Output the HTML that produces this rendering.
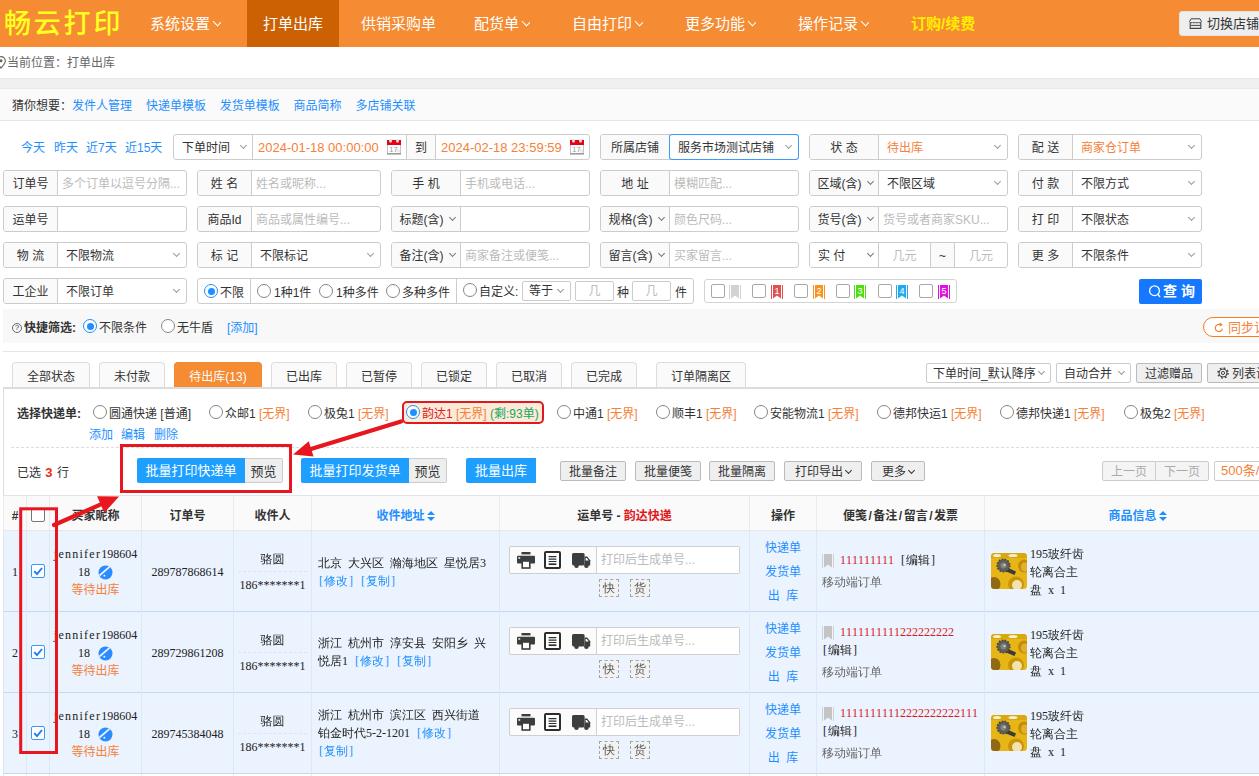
<!DOCTYPE html>
<html lang="zh-CN">
<head>
<meta charset="utf-8">
<title>畅云打印 - 打单出库</title>
<style>
*{box-sizing:border-box;margin:0;padding:0}
html,body{width:1259px;height:776px;overflow:hidden;background:#fff}
body{font-family:"Liberation Sans","Noto Sans CJK SC",sans-serif;font-size:12px;color:#333;position:relative}
a{color:#1e8fff;text-decoration:none}
.abs{position:absolute}
/* NAV */
#nav{position:absolute;left:0;top:0;width:1259px;height:47px;background:#f58b32}
#logo{position:absolute;left:4px;top:0;height:47px;line-height:49px;font-size:27px;color:#ffff22;font-family:"Liberation Sans","Noto Sans CJK SC",sans-serif;font-weight:500;letter-spacing:2.8px;white-space:nowrap}
.ni{position:absolute;top:0;height:47px;line-height:48px;overflow:hidden;font-size:15px;color:#fff;white-space:nowrap}
.ni.act{background:#cc6103;text-align:center}
.chev{display:inline-block;width:7px;height:7px;border-right:1.7px solid currentColor;border-bottom:1.7px solid currentColor;transform:rotate(45deg);margin-left:4px;position:relative;top:-4px}
#sw{position:absolute;left:1179px;top:11px;width:90px;height:25px;background:#eee;border:1px solid #e2e2e2;border-radius:3px;font-size:13px;color:#333;line-height:24px;padding-left:27px;white-space:nowrap}

/* BREADCRUMB */
#crumb{position:absolute;left:0;top:47px;width:1259px;height:31px;background:#fff;color:#666;font-size:12px;line-height:33px;padding-left:7px}
#band1{position:absolute;left:0;top:78px;width:1259px;height:10px;background:#f0f0f0;border-top:1px solid #e6e6e6}
#guess{position:absolute;left:0;top:88px;width:1259px;height:33px;background:#fafafa;border-top:1px solid #e9e9e9;border-bottom:1px solid #e6e6e6;line-height:34px;padding-left:12px;color:#333;white-space:nowrap;overflow:hidden}
#guess a{margin-right:10.5px}
/* FILTER */
.fg{position:absolute;height:26px;border:1px solid #ccc;border-radius:3px;background:#fff;overflow:hidden;white-space:nowrap}
.fg .lb{position:absolute;left:0;top:0;height:24px;line-height:26px;text-align:center;background:#fafafa;border-right:1px solid #ccc;color:#333;font-size:12px}
.fg .in{position:absolute;top:0;height:24px;line-height:26px;padding-left:4px;color:#333;font-size:12px}
.fg .ph{color:#bbb}
.fg .or{color:#f5813a}
.sel:after{content:"";position:absolute;right:7.5px;top:8px;width:4px;height:4px;border-right:1px solid #999;border-bottom:1px solid #999;transform:rotate(45deg)}
.lbsel:after{content:"";position:absolute;right:5px;top:8px;width:4px;height:4px;border-right:1px solid #777;border-bottom:1px solid #777;transform:rotate(45deg)}
.ql{position:absolute;top:134px;line-height:29px;font-size:12px;color:#1e8fff}
.radio{position:absolute;width:14px;height:14px;border:1px solid #858585;border-radius:50%;background:#fff}
.radio.on{border-color:#1e8fff;border-width:1.3px}
.radio.on:after{content:"";position:absolute;left:50%;top:50%;width:7px;height:7px;margin:-3.5px 0 0 -3.5px;border-radius:50%;background:#1e8fff}
.cb{position:absolute;width:14px;height:14px;border:1px solid #767676;border-radius:2px;background:#fff}
.t13{position:absolute;font-size:12px;line-height:16px;margin-top:2px;white-space:nowrap;color:#333}

#query{position:absolute;left:1139px;top:279px;width:63px;height:25px;background:#1677ff;border-radius:2px;color:#fff;font-size:14px;font-weight:bold;line-height:25px;padding-left:24px;white-space:nowrap}
.sel{position:absolute}

#quick{position:absolute;left:3px;top:309px;width:1256px;height:34px;background:#f8f8f8}
#sync{position:absolute;left:1200px;top:8px;width:90px;height:20px;border:1px solid #f57c1f;border-radius:10px;background:#fff;color:#f5813a;font-size:13px;line-height:19px;padding-left:24px;white-space:nowrap}
.tab{position:absolute;top:362px;height:26px;border:1px solid #ddd;border-bottom:0;border-radius:4px 4px 0 0;background:#fafafa;text-align:center;line-height:28px;font-size:12px;color:#333;white-space:nowrap;overflow:hidden}
.tab.on{background:#f58b32;border-color:#f58b32;color:#fff}
.tsel{position:absolute;top:363px;height:20px;border:1px solid #ccc;border-radius:2px;background:#fff;font-size:12px;line-height:20px;overflow:hidden;padding-left:7px;white-space:nowrap;color:#333}
.tsel.sel:after{top:5px;right:6px;width:4px;height:4px}
.gbtn{position:absolute;top:461px;height:20px;border:1px solid #bbb;border-radius:2px;background:#efefef;font-size:12px;line-height:20px;overflow:hidden;text-align:center;color:#333;white-space:nowrap}
.bbtn{position:absolute;top:458px;height:25px;background:#1e9fff;border-radius:2px 0 0 2px;color:#fff;font-size:13px;line-height:26px;text-align:center;white-space:nowrap;overflow:hidden}
.pbtn{position:absolute;top:458px;width:38px;height:25px;background:#eee;border:1px solid #ccc;border-left:0;border-radius:0 2px 2px 0;color:#333;font-size:13px;line-height:25px;text-align:center;overflow:hidden}
.chev.sm{width:5px;height:5px;border-width:1px;margin-left:3px;top:-3px}

.cal{position:absolute;right:5px;top:4px}
.sel.s2:after{right:6px}
.sel.s3:after{right:7px;top:5px}
.qm{display:inline-block;width:10px;height:10px;border:1px solid #666;border-radius:50%;font-size:8px;line-height:8px;text-align:center;font-weight:normal;vertical-align:2.5px;margin-right:2px;color:#444}
/* TABLE */
#tb{position:absolute;left:3px;top:495px;width:1256px;height:281px;font-family:"Liberation Serif","WenQuanYi Zen Hei",serif;font-size:12px;color:#222;overflow:hidden;word-spacing:3px;font-kerning:none}
.thead{position:absolute;left:0;top:0;width:1290px;height:35px;background:#fafafa;border-top:1px solid #e1e5e9}
.th{position:absolute;top:0;height:34px;line-height:40px;text-align:center;font-weight:bold;border-left:1px solid #ebebeb;font-family:"Liberation Sans","Noto Sans CJK SC",sans-serif;color:#333;white-space:nowrap;word-spacing:0;overflow:hidden}
.th .bl{color:#1e8fff}
.th u{text-decoration:none;padding:0 1.5px}
.tr{position:absolute;left:0;width:1290px;height:81px;background:#ebf3fe;border-top:1px solid #c3d8f3}
.tr.first{border-top-color:#e6e6e6}
.tr.last{height:82px;border-bottom:1px solid #c3d8f3}
.td{position:absolute;top:-1px;height:81px;border-left:1px solid #dde7f5}
.ln{position:absolute;left:0;right:0;white-space:nowrap;line-height:14px}
.ls{letter-spacing:1.25px}
.lk i{display:inline-block;width:6px;text-align:center;font-style:normal}
a.lk{color:#1e8fff}
.cb.on{border-color:#3a97ff}
.st{color:#f5813a;font-family:"Liberation Sans","Noto Sans CJK SC",sans-serif}
.op{text-align:center;line-height:24px;font-family:"Liberation Sans","Noto Sans CJK SC",sans-serif;word-spacing:0}
.rd{color:#d8191e}
.trk{position:absolute;left:9px;top:16px;width:231px;height:28px;border:1px solid #cfcfcf;border-radius:2px;background:#fbfbfb}
.trkin{position:absolute;left:86px;top:0;width:143px;height:26px;background:#fff;border-left:1px solid #d0d0d0;line-height:27px;padding-left:4px;color:#bbb;font-family:"Liberation Sans","Noto Sans CJK SC",sans-serif;word-spacing:0;overflow:hidden}
.dsh{position:absolute;top:49px;width:20px;height:18px;border:1px dashed #a5a5a5;line-height:17px;text-align:center;color:#555;background:#f2f2f2}
.pimg{position:absolute;left:6px;top:23px}
.ptxt{position:absolute;left:45px;top:15px;line-height:18px;white-space:nowrap}
.ww{vertical-align:-4px;margin-left:2px}
.flag0{vertical-align:-4px;margin-right:6px}
.sort{display:inline-block;width:8px;height:10px;margin-left:2px;position:relative;vertical-align:-1px}
.sort:before{content:"";position:absolute;left:0;top:0;border:4px solid transparent;border-top:0;border-bottom:4px solid #1e8fff}
.sort:after{content:"";position:absolute;left:0;top:6px;border:4px solid transparent;border-bottom:0;border-top:4px solid #1e8fff}
</style>
</head>
<body>
<div id="nav">
  <div id="logo">畅云打印</div>
  <div class="ni" style="left:150px">系统设置<i class="chev"></i></div>
  <div class="ni act" style="left:247px;width:92px">打单出库</div>
  <div class="ni" style="left:361px">供销采购单</div>
  <div class="ni" style="left:474px">配货单<i class="chev"></i></div>
  <div class="ni" style="left:572px">自由打印<i class="chev"></i></div>
  <div class="ni" style="left:685px">更多功能<i class="chev"></i></div>
  <div class="ni" style="left:798px">操作记录<i class="chev"></i></div>
  <div class="ni" style="left:911px;color:#ffee00;font-weight:bold">订购/续费</div>
  <div id="sw"><svg class="abs" style="left:9px;top:6px" width="13" height="12" viewBox="0 0 13 12"><path d="M1.2 4.6V10.4h10.6V4.6" fill="none" stroke="#444" stroke-width="1.1"/><path d="M2 0.8h9l1.4 2.6a1.6 1.6 0 0 1-3 .6a1.6 1.6 0 0 1-2.9 0a1.6 1.6 0 0 1-2.9 0a1.6 1.6 0 0 1-3-.6z" fill="#eee" stroke="#444" stroke-width="1"/><path d="M1.4 7.4h10.2" stroke="#444" stroke-width="1"/></svg>切换店铺</div>
</div>

<div id="crumb"><svg class="abs" style="left:-4px;top:9px" width="10" height="13" viewBox="0 0 10 13"><path d="M5 .6a4.3 4.3 0 0 1 4.3 4.3c0 2.6-2.6 5-4.3 7.2C3.300 9.900 .7 7.500 .7 4.900A4.300 4.300 0 0 1 5 .6z" fill="none" stroke="#666" stroke-width="1.1"/><circle cx="5" cy="4.800" r="1.5" fill="#666"/></svg>当前位置：打单出库</div>
<div id="band1"></div>
<div id="guess">猜你想要：<a>发件人管理</a> <a>快递单模板</a> <a>发货单模板</a> <a>商品简称</a> <a>多店铺关联</a></div>

<!-- filter row 1 -->
<a class="ql" style="left:21px">今天</a><a class="ql" style="left:54px">昨天</a><a class="ql" style="left:86px">近7天</a><a class="ql" style="left:125px">近15天</a>
<div class="fg" style="left:173px;top:134px;width:417px">
  <div class="in sel s2" style="left:0;width:79px;padding-left:8px;border-right:1px solid #ccc">下单时间</div>
  <div class="in or" style="left:79px;width:154px;font-size:13px;padding-left:5px;border-right:1px solid #ccc">2024-01-18 00:00:00<svg class="cal" width="14" height="16" viewBox="0 0 14 16"><rect x="0.5" y="2.5" width="13" height="12" fill="#fff" stroke="#c4c4c4"/><rect x="0" y="1" width="14" height="5" fill="#e60012"/><rect x="2.2" y="0" width="2.6" height="3.6" rx="1.2" fill="#ddd"/><rect x="9.2" y="0" width="2.6" height="3.6" rx="1.2" fill="#ddd"/><text x="6.5" y="12.6" font-size="7.5" text-anchor="middle" fill="#9a9a9a" font-family="Liberation Sans, sans-serif">17</text><circle cx="11.3" cy="12" r="1.3" fill="#fff" stroke="#ccc" stroke-width=".6"/><rect x="0" y="14" width="14" height="1.6" fill="#9c9c9c"/></svg></div>
  <div class="lb" style="left:233px;width:29px;border-left:0">到</div>
  <div class="in or" style="left:262px;width:153px;font-size:13px;padding-left:5px">2024-02-18 23:59:59<svg class="cal" width="14" height="16" viewBox="0 0 14 16"><rect x="0.5" y="2.5" width="13" height="12" fill="#fff" stroke="#c4c4c4"/><rect x="0" y="1" width="14" height="5" fill="#e60012"/><rect x="2.2" y="0" width="2.6" height="3.6" rx="1.2" fill="#ddd"/><rect x="9.2" y="0" width="2.6" height="3.6" rx="1.2" fill="#ddd"/><text x="6.5" y="12.6" font-size="7.5" text-anchor="middle" fill="#9a9a9a" font-family="Liberation Sans, sans-serif">17</text><circle cx="11.3" cy="12" r="1.3" fill="#fff" stroke="#ccc" stroke-width=".6"/><rect x="0" y="14" width="14" height="1.6" fill="#9c9c9c"/></svg></div>
</div>
<div class="fg" style="left:600px;top:134px;width:199px"><div class="lb" style="width:69px">所属店铺</div><div class="in  sel" style="left:69px;width:128px;padding-left:8px">服务市场测试店铺</div></div>
<div class="fg" style="left:809px;top:134px;width:199px"><div class="lb" style="width:69px">状 态</div><div class="in or sel" style="left:69px;width:128px;padding-left:8px">待出库</div></div>
<div class="fg" style="left:1018px;top:134px;width:184px"><div class="lb" style="width:54px">配 送</div><div class="in or sel" style="left:54px;width:128px;padding-left:8px">商家仓订单</div></div>
<div class="fg" style="left:3px;top:170px;width:184px"><div class="lb" style="width:54px">订单号</div><div class="in ph" style="left:54px;width:128px">多个订单以逗号分隔...</div></div>
<div class="fg" style="left:197px;top:170px;width:184px"><div class="lb" style="width:54px">姓 名</div><div class="in ph" style="left:54px;width:128px">姓名或昵称...</div></div>
<div class="fg" style="left:391px;top:170px;width:199px"><div class="lb" style="width:69px">手 机</div><div class="in ph" style="left:69px;width:128px">手机或电话...</div></div>
<div class="fg" style="left:600px;top:170px;width:199px"><div class="lb" style="width:69px">地 址</div><div class="in ph" style="left:69px;width:128px">模糊匹配...</div></div>
<div class="fg" style="left:809px;top:170px;width:199px"><div class="lb lbsel" style="width:69px;padding-right:9px">区域(含)</div><div class="in  sel" style="left:69px;width:128px;padding-left:8px">不限区域</div></div>
<div class="fg" style="left:1018px;top:170px;width:184px"><div class="lb" style="width:54px">付 款</div><div class="in  sel" style="left:54px;width:128px;padding-left:8px">不限方式</div></div>
<div class="fg" style="left:3px;top:206px;width:184px"><div class="lb" style="width:54px">运单号</div><div class="in " style="left:54px;width:128px"></div></div>
<div class="fg" style="left:197px;top:206px;width:184px"><div class="lb" style="width:54px">商品Id</div><div class="in ph" style="left:54px;width:128px">商品或属性编号...</div></div>
<div class="fg" style="left:391px;top:206px;width:199px"><div class="lb lbsel" style="width:69px;padding-right:9px">标题(含)</div><div class="in " style="left:69px;width:128px"></div></div>
<div class="fg" style="left:600px;top:206px;width:199px"><div class="lb lbsel" style="width:69px;padding-right:9px">规格(含)</div><div class="in ph" style="left:69px;width:128px">颜色尺码...</div></div>
<div class="fg" style="left:809px;top:206px;width:199px"><div class="lb lbsel" style="width:69px;padding-right:9px">货号(含)</div><div class="in ph" style="left:69px;width:128px">货号或者商家SKU...</div></div>
<div class="fg" style="left:1018px;top:206px;width:184px"><div class="lb" style="width:54px">打 印</div><div class="in  sel" style="left:54px;width:128px;padding-left:8px">不限状态</div></div>
<div class="fg" style="left:3px;top:242px;width:184px"><div class="lb" style="width:54px">物 流</div><div class="in  sel" style="left:54px;width:128px;padding-left:8px">不限物流</div></div>
<div class="fg" style="left:197px;top:242px;width:184px"><div class="lb" style="width:54px">标 记</div><div class="in  sel" style="left:54px;width:128px;padding-left:8px">不限标记</div></div>
<div class="fg" style="left:391px;top:242px;width:199px"><div class="lb lbsel" style="width:69px;padding-right:9px">备注(含)</div><div class="in ph" style="left:69px;width:128px">商家备注或便笺...</div></div>
<div class="fg" style="left:600px;top:242px;width:199px"><div class="lb lbsel" style="width:69px;padding-right:9px">留言(含)</div><div class="in ph" style="left:69px;width:128px">买家留言...</div></div>
<div class="fg" style="left:1018px;top:242px;width:184px"><div class="lb" style="width:54px">更 多</div><div class="in  sel" style="left:54px;width:128px;padding-left:8px">不限条件</div></div>
<div class="fg" style="left:3px;top:278px;width:184px"><div class="lb" style="width:54px">工企业</div><div class="in  sel" style="left:54px;width:128px;padding-left:8px">不限订单</div></div>

<div class="abs" style="left:669px;top:134px;width:130px;height:26px;border:1px solid #3b9cff;border-radius:3px"></div>
<!-- shifu -->
<div class="fg" style="left:809px;top:242px;width:199px">
  <div class="lb lbsel" style="width:69px;text-align:left;padding-left:8px;background:#fff">实 付</div>
  <div class="in ph" style="left:69px;width:52px;text-align:center;padding:0;border-right:1px solid #ccc">几元</div>
  <div class="lb" style="left:121px;width:24px">~</div>
  <div class="in ph" style="left:145px;width:52px;text-align:center;padding:0">几元</div>
</div>
<!-- radios row -->
<div class="fg" style="left:197px;top:278px;width:497px">
  <div class="abs" style="left:52px;top:0;width:1px;height:24px;background:#ccc"></div>
  <div class="abs" style="left:258px;top:0;width:1px;height:24px;background:#ccc"></div>
  <i class="radio on" style="left:6px;top:5px"></i><span class="t13" style="left:22px;top:4px">不限</span>
  <i class="radio" style="left:59px;top:5px"></i><span class="t13" style="left:76px;top:4px">1种1件</span>
  <i class="radio" style="left:121px;top:5px"></i><span class="t13" style="left:138px;top:4px">1种多件</span>
  <i class="radio" style="left:188px;top:5px"></i><span class="t13" style="left:204px;top:4px">多种多件</span>
  <i class="radio" style="left:265px;top:4px"></i><span class="t13" style="left:281px;top:3px">自定义:</span>
  <div class="abs sel s3" style="left:324px;top:2px;width:49px;height:20px;border:1px solid #ccc;border-radius:2px;font-size:12px;line-height:18px;padding-left:6px">等于</div>
  <div class="abs ph" style="left:377px;top:2px;width:39px;height:20px;border:1px solid #ccc;border-radius:2px;font-size:12px;line-height:18px;text-align:center">几</div>
  <span class="t13" style="left:419px;top:4px">种</span>
  <div class="abs ph" style="left:434px;top:2px;width:39px;height:20px;border:1px solid #ccc;border-radius:2px;font-size:12px;line-height:18px;text-align:center">几</div>
  <span class="t13" style="left:477px;top:4px">件</span>
</div>
<!-- flags -->
<div class="fg" id="flags" style="left:704px;top:279px;width:253px;height:24px;border-color:#d4d4d4">
<i class="cb" style="left:6px;top:4px;border-color:#a8a8a8"></i><svg class="abs" style="left:24px;top:5px" width="12" height="14" viewBox="0 0 12 14"><rect x="0" y="0" width="1" height="14" fill="#d2d2d2"/><rect x="11" y="0" width="1" height="14" fill="#d2d2d2"/><path d="M2 0h8v13.5l-4-3-4 3z" fill="#d2d2d2"/></svg>
<i class="cb" style="left:47px;top:4px;border-color:#a8a8a8"></i><svg class="abs" style="left:66px;top:5px" width="12" height="14" viewBox="0 0 12 14"><rect x="0" y="0" width="1" height="14" fill="#e05252"/><rect x="11" y="0" width="1" height="14" fill="#e05252"/><path d="M2 0h8v13.5l-4-3-4 3z" fill="#e05252"/><text x="6" y="9.3" font-size="9" text-anchor="middle" fill="#fff" font-family="Liberation Sans, sans-serif">1</text></svg>
<i class="cb" style="left:89px;top:4px;border-color:#a8a8a8"></i><svg class="abs" style="left:108px;top:5px" width="12" height="14" viewBox="0 0 12 14"><rect x="0" y="0" width="1" height="14" fill="#f7941d"/><rect x="11" y="0" width="1" height="14" fill="#f7941d"/><path d="M2 0h8v13.5l-4-3-4 3z" fill="#f7941d"/><text x="6" y="9.3" font-size="9" text-anchor="middle" fill="#fff" font-family="Liberation Sans, sans-serif">2</text></svg>
<i class="cb" style="left:131px;top:4px;border-color:#a8a8a8"></i><svg class="abs" style="left:149px;top:5px" width="12" height="14" viewBox="0 0 12 14"><rect x="0" y="0" width="1" height="14" fill="#4fdc10"/><rect x="11" y="0" width="1" height="14" fill="#4fdc10"/><path d="M2 0h8v13.5l-4-3-4 3z" fill="#4fdc10"/><text x="6" y="9.3" font-size="9" text-anchor="middle" fill="#fff" font-family="Liberation Sans, sans-serif">3</text></svg>
<i class="cb" style="left:173px;top:4px;border-color:#a8a8a8"></i><svg class="abs" style="left:191px;top:5px" width="12" height="14" viewBox="0 0 12 14"><rect x="0" y="0" width="1" height="14" fill="#22aaee"/><rect x="11" y="0" width="1" height="14" fill="#22aaee"/><path d="M2 0h8v13.5l-4-3-4 3z" fill="#22aaee"/><text x="6" y="9.3" font-size="9" text-anchor="middle" fill="#fff" font-family="Liberation Sans, sans-serif">4</text></svg>
<i class="cb" style="left:214px;top:4px;border-color:#a8a8a8"></i><svg class="abs" style="left:233px;top:5px" width="12" height="14" viewBox="0 0 12 14"><rect x="0" y="0" width="1" height="14" fill="#dd12dd"/><rect x="11" y="0" width="1" height="14" fill="#dd12dd"/><path d="M2 0h8v13.5l-4-3-4 3z" fill="#dd12dd"/><text x="6" y="9.3" font-size="9" text-anchor="middle" fill="#fff" font-family="Liberation Sans, sans-serif">5</text></svg>
</div>
<div id="query"><svg class="abs" style="left:9px;top:5px" width="15" height="15" viewBox="0 0 15 15"><circle cx="6.5" cy="6.7" r="4.9" fill="none" stroke="#fff" stroke-width="1.3"/><path d="M9.8 10.4l2 2.2" stroke="#fff" stroke-width="1.4" stroke-linecap="round"/></svg>查 询</div>

<!-- quick filter band -->
<div id="quick">
  <span class="t13" style="left:9px;top:9px;font-weight:bold"><span class="qm">?</span>快捷筛选:</span>
  <i class="radio on" style="left:80px;top:10px"></i><span class="t13" style="left:96px;top:9px">不限条件</span>
  <i class="radio" style="left:158px;top:10px"></i><span class="t13" style="left:174px;top:9px">无牛盾</span>
  <a class="t13" style="left:224px;top:9px;color:#1e8fff">[添加]</a>
  <div id="sync"><svg class="abs" style="left:10px;top:4px" width="10" height="11" viewBox="0 0 10 11"><path d="M7.6 3.6A3.6 3.6 0 1 0 8.4 6.6" fill="none" stroke="#f5813a" stroke-width="1.2"/><path d="M5.2 0.6L8.6 2.2L6 4.6z" fill="#f5813a"/></svg>同步订单</div>
</div>
<div class="abs" style="left:3px;top:351px;width:1256px;height:1px;background:#e6e6e6"></div>
<!-- tabs -->
<div class="tab" style="left:12px;width:78px">全部状态</div>
<div class="tab" style="left:99px;width:66px">未付款</div>
<div class="tab on" style="left:174px;width:88px">待出库(13)</div>
<div class="tab" style="left:271px;width:66px">已出库</div>
<div class="tab" style="left:346px;width:66px">已暂停</div>
<div class="tab" style="left:421px;width:66px">已锁定</div>
<div class="tab" style="left:496px;width:66px">已取消</div>
<div class="tab" style="left:571px;width:66px">已完成</div>
<div class="tab" style="left:656px;width:90px">订单隔离区</div>

<div class="abs" style="left:3px;top:387px;width:1256px;height:2px;background:#dcdcdc"></div>
<div class="abs" style="left:3px;top:388px;width:1px;height:388px;background:#ddd"></div>
<div class="tsel sel" style="left:926px;width:125px;padding-left:6px">下单时间_默认降序</div>
<div class="tsel sel" style="left:1056px;width:75px">自动合并</div>
<div class="gbtn" style="left:1136px;top:363px;width:66px;height:20px;line-height:20px">过滤赠品</div>
<div class="gbtn" style="left:1207px;top:363px;width:70px;height:20px;line-height:20px;text-align:left;padding-left:24px"><svg class="abs" style="left:9px;top:3px" width="12" height="12" viewBox="0 0 12 12"><circle cx="6" cy="6" r="4" fill="none" stroke="#444" stroke-width="1"/><circle cx="6" cy="6" r="5" fill="none" stroke="#444" stroke-width="1.5" stroke-dasharray="1.8 2.13"/><circle cx="6" cy="6" r="1.6" fill="none" stroke="#444" stroke-width="1"/></svg>列表设置</div>
<!-- express -->
<span class="t13" style="left:17px;top:404px;font-weight:bold">选择快递单:</span>
<i class="radio" style="left:93px;top:405px"></i><span class="t13" style="left:109px;top:404px">圆通快递 <span style="color:#333">[普通]</span></span>
<i class="radio" style="left:209px;top:405px"></i><span class="t13" style="left:225px;top:404px">众邮1 <span style="color:#f5813a">[无界]</span></span>
<i class="radio" style="left:308px;top:405px"></i><span class="t13" style="left:324px;top:404px">极兔1 <span style="color:#f5813a">[无界]</span></span>
<i class="radio" style="left:557px;top:405px"></i><span class="t13" style="left:573px;top:404px">中通1 <span style="color:#f5813a">[无界]</span></span>
<i class="radio" style="left:656px;top:405px"></i><span class="t13" style="left:672px;top:404px">顺丰1 <span style="color:#f5813a">[无界]</span></span>
<i class="radio" style="left:754px;top:405px"></i><span class="t13" style="left:770px;top:404px">安能物流1 <span style="color:#f5813a">[无界]</span></span>
<i class="radio" style="left:877px;top:405px"></i><span class="t13" style="left:893px;top:404px">德邦快运1 <span style="color:#f5813a">[无界]</span></span>
<i class="radio" style="left:1000px;top:405px"></i><span class="t13" style="left:1016px;top:404px">德邦快递1 <span style="color:#f5813a">[无界]</span></span>
<i class="radio" style="left:1124px;top:405px"></i><span class="t13" style="left:1140px;top:404px">极兔2 <span style="color:#f5813a">[无界]</span></span>

<div class="abs" style="left:402px;top:401px;width:142px;height:23px;border:2px solid #e0191e;border-radius:5px;background:#fdebd9"></div>
<i class="radio on" style="left:406px;top:405px"></i><span class="t13" style="left:422px;top:404px;color:#e0191e">韵达1 <span style="color:#f5813a">[无界]</span> <span style="color:#19a55e">(剩:93单)</span></span>
<a class="t13" style="left:89px;top:425px;color:#1e8fff">添加</a><a class="t13" style="left:121px;top:425px;color:#1e8fff">编辑</a><a class="t13" style="left:154px;top:425px;color:#1e8fff">删除</a>
<div class="abs" style="left:11px;top:447px;width:1248px;height:0;border-top:1px dashed #ddd"></div>
<!-- action bar -->
<span class="t13" style="left:17px;top:463px">已选 <b style="color:#ee2a10;font-size:13px;padding:0 1px">3</b> 行</span>
<div class="bbtn" style="left:137px;width:108px">批量打印快递单</div><div class="pbtn" style="left:245px">预览</div>
<div class="bbtn" style="left:301px;width:108px">批量打印发货单</div><div class="pbtn" style="left:409px">预览</div>
<div class="bbtn" style="left:466px;width:70px">批量出库</div>
<div class="gbtn" style="left:560px;width:66px">批量备注</div>
<div class="gbtn" style="left:635px;width:66px">批量便笺</div>
<div class="gbtn" style="left:709px;width:66px">批量隔离</div>
<div class="gbtn" style="left:784px;width:78px">打印导出<i class="chev sm"></i></div>
<div class="gbtn" style="left:871px;width:54px">更多<i class="chev sm"></i></div>
<div class="gbtn" style="left:1102px;width:54px;color:#aaa;border-radius:2px 0 0 2px;background:#f4f4f4;border-color:#ccc">上一页</div>
<div class="gbtn" style="left:1155px;width:54px;color:#aaa;border-radius:0 2px 2px 0;background:#f4f4f4;border-color:#ccc">下一页</div>
<div class="abs" style="left:1214px;top:461px;width:60px;height:20px;border:1px solid #ccc;border-radius:2px;background:#fff;color:#f5813a;font-size:13px;line-height:18px;padding-left:6px;white-space:nowrap">500条/页</div>
<!-- TABLE -->
<div id="tb">
<div class="thead"><div class="th" style="left:0px;width:23px">#</div><div class="th" style="left:23px;width:23px"><i class="cb" style="left:4px;top:12px"></i></div><div class="th" style="left:46px;width:92px">买家昵称</div><div class="th" style="left:138px;width:92px">订单号</div><div class="th" style="left:230px;width:78px">收件人</div><div class="th" style="left:308px;width:188px"><span class="bl">收件地址<i class="sort"></i></span></div><div class="th" style="left:496px;width:250px">运单号 - <span style="color:#e0191e">韵达快递</span></div><div class="th" style="left:746px;width:67px">操作</div><div class="th" style="left:813px;width:168px">便笺<u>/</u>备注<u>/</u>留言<u>/</u>发票</div><div class="th" style="left:981px;width:306px"><span class="bl">商品信息<i class="sort"></i></span></div></div>
<div class="tr first" style="top:35px">
<div class="td" style="left:0px;width:23px;"><div class="ln" style="top:35px;text-align:center">1</div></div>
<div class="td" style="left:23px;width:23px;"><i class="cb on" style="left:4px;top:34px"><svg class="abs" style="left:0;top:0" width="12" height="12" viewBox="0 0 12 12"><path d="M2.2 6.2L5 9L10 3" fill="none" stroke="#1e7ff0" stroke-width="1.9"/></svg></i></div>
<div class="td" style="left:46px;width:92px;"><div class="ln" style="top:15px;text-align:center;line-height:18px"><span class="ls">jennifer</span>198604<br>18 <svg class="ww" width="15" height="15" viewBox="0 0 15 15"><circle cx="7.5" cy="7.5" r="7" fill="#2b8cff"/><path d="M1.5 10.5L11.5 1.8" stroke="#eaf3fd" stroke-width="1.7"/><circle cx="6.4" cy="10.8" r="1" fill="#eaf3fd"/></svg><br><span class="st">等待出库</span></div></div>
<div class="td" style="left:138px;width:92px;"><div class="ln" style="top:35px;text-align:center">289787868614</div></div>
<div class="td" style="left:230px;width:78px;"><div class="ln" style="top:19px;text-align:center;line-height:20px">骆圆</div><div class="abs" style="left:4px;right:4px;top:41px;border-top:1px dashed #dfe3ea"></div><div class="ln" style="top:45px;text-align:center;line-height:20px">186*******1</div></div>
<div class="td" style="left:308px;width:188px;"><div class="ln" style="top:24px;padding-left:6px;line-height:18px">北京 大兴区 瀚海地区 星悦居3<br><a class="lk"><i>[</i>修改<i>]</i></a> <a class="lk"><i>[</i>复制<i>]</i></a></div></div>
<div class="td" style="left:496px;width:250px;"><div class="trk"><svg class="abs" style="left:7px;top:4.5px" width="18" height="17" viewBox="0 0 18 17"><rect x="4.5" y="0" width="9" height="2.4" fill="#3d3d3d"/><rect x="0" y="3.8" width="18" height="7.6" rx="1" fill="#3d3d3d"/><rect x="1.4" y="5.2" width="1.8" height="1.5" fill="#fff"/><rect x="5.2" y="9" width="7.6" height="7" fill="#fff" stroke="#3d3d3d" stroke-width="1.6"/></svg><svg class="abs" style="left:34px;top:4px" width="17" height="18" viewBox="0 0 17 18"><rect x="1" y="1" width="15" height="16" rx="1" fill="#fff" stroke="#2e2e2e" stroke-width="2"/><path d="M4.6 5.6h7.800M4.600 8.100h7.800M4.600 10.500h7.800" stroke="#2e2e2e" stroke-width="1.100"/><path d="M4.600 13.200h7.800" stroke="#2e2e2e" stroke-width="1.700"/></svg><svg class="abs" style="left:62px;top:5.5px" width="19" height="16" viewBox="0 0 19 16"><rect x="0" y="0" width="12.600" height="12.400" rx="1.600" fill="#3d3d3d"/><path d="M12.600 3.600h2.600l3 3.600v5.200h-5.600z" fill="#3d3d3d"/><path d="M13.600 5h1.200l1.900 2.400h-3.100z" fill="#fff"/><circle cx="4.500" cy="12.800" r="2.300" fill="#3d3d3d"/><circle cx="14.400" cy="12.800" r="2.300" fill="#3d3d3d"/></svg><span class="trkin">打印后生成单号...</span></div><span class="dsh" style="left:99px">快</span><span class="dsh" style="left:130px">货</span></div>
<div class="td" style="left:746px;width:67px;"><div class="ln op" style="top:6px"><a>快递单</a><br><a>发货单</a><br><a style="word-spacing:3px">出 库</a></div></div>
<div class="td" style="left:813px;width:168px;"><div class="ln" style="top:21px;padding-left:5px;line-height:18px"><svg class="flag0" width="12" height="14" viewBox="0 0 12 14"><rect x="0" y="0" width="1" height="14" fill="#d2d2d2"/><rect x="11" y="0" width="1" height="14" fill="#d2d2d2"/><path d="M2 0h8v13.5l-4-3-4 3z" fill="#c4c4c4"/></svg><span class="rd">111111111</span> <span class="lk"><i>[</i>编辑<i>]</i></span><div style="color:#666;margin-top:4px">移动端订单</div></div></div>
<div class="td" style="left:981px;width:306px;"><svg class="pimg" width="36" height="36" viewBox="0 0 36 36"><defs><clipPath id="pc0"><rect width="36" height="36" rx="3.5"/></clipPath></defs><g clip-path="url(#pc0)"><rect width="36" height="36" fill="#e7b616"/><rect x="0" y="0" width="36" height="5" fill="#d9a80e"/><ellipse cx="6" cy="2.5" rx="4" ry="1.6" fill="#f7efd0"/><ellipse cx="22" cy="2.5" rx="4.5" ry="1.6" fill="#f7efd0"/><ellipse cx="33" cy="13" rx="6" ry="6.5" fill="#c48d08"/><ellipse cx="34" cy="14" rx="4" ry="4.5" fill="#e0b030"/><ellipse cx="3" cy="31" rx="6.5" ry="7" fill="#8f6a12"/><ellipse cx="25" cy="31" rx="8" ry="7.5" fill="#c99508"/><ellipse cx="26" cy="32" rx="5" ry="5" fill="#f3e2b0"/><path d="M15 14l10 4.5l-1.5 3.5l-9.5-4z" fill="#3c3b38"/><circle cx="12.5" cy="12.5" r="6.3" fill="#5f5e58" stroke="#47463f" stroke-width="1.6" stroke-dasharray="1.7 1.3"/><circle cx="12.5" cy="12.5" r="3" fill="#85847c"/><circle cx="13.5" cy="12" r="1.1" fill="#d8d6cc"/></g></svg><div class="ptxt">195玻纤齿<br>轮离合主<br>盘 x 1</div></div>
</div>
<div class="tr" style="top:116px">
<div class="td" style="left:0px;width:23px;"><div class="ln" style="top:35px;text-align:center">2</div></div>
<div class="td" style="left:23px;width:23px;"><i class="cb on" style="left:4px;top:34px"><svg class="abs" style="left:0;top:0" width="12" height="12" viewBox="0 0 12 12"><path d="M2.2 6.2L5 9L10 3" fill="none" stroke="#1e7ff0" stroke-width="1.9"/></svg></i></div>
<div class="td" style="left:46px;width:92px;"><div class="ln" style="top:15px;text-align:center;line-height:18px"><span class="ls">jennifer</span>198604<br>18 <svg class="ww" width="15" height="15" viewBox="0 0 15 15"><circle cx="7.5" cy="7.5" r="7" fill="#2b8cff"/><path d="M1.5 10.5L11.5 1.8" stroke="#eaf3fd" stroke-width="1.7"/><circle cx="6.4" cy="10.8" r="1" fill="#eaf3fd"/></svg><br><span class="st">等待出库</span></div></div>
<div class="td" style="left:138px;width:92px;"><div class="ln" style="top:35px;text-align:center">289729861208</div></div>
<div class="td" style="left:230px;width:78px;"><div class="ln" style="top:19px;text-align:center;line-height:20px">骆圆</div><div class="abs" style="left:4px;right:4px;top:41px;border-top:1px dashed #dfe3ea"></div><div class="ln" style="top:45px;text-align:center;line-height:20px">186*******1</div></div>
<div class="td" style="left:308px;width:188px;"><div class="ln" style="top:23px;padding-left:6px;line-height:18px">浙江 杭州市 淳安县 安阳乡 兴<br>悦居1 <a class="lk"><i>[</i>修改<i>]</i></a> <a class="lk"><i>[</i>复制<i>]</i></a></div></div>
<div class="td" style="left:496px;width:250px;"><div class="trk"><svg class="abs" style="left:7px;top:4.5px" width="18" height="17" viewBox="0 0 18 17"><rect x="4.5" y="0" width="9" height="2.4" fill="#3d3d3d"/><rect x="0" y="3.8" width="18" height="7.6" rx="1" fill="#3d3d3d"/><rect x="1.4" y="5.2" width="1.8" height="1.5" fill="#fff"/><rect x="5.2" y="9" width="7.6" height="7" fill="#fff" stroke="#3d3d3d" stroke-width="1.6"/></svg><svg class="abs" style="left:34px;top:4px" width="17" height="18" viewBox="0 0 17 18"><rect x="1" y="1" width="15" height="16" rx="1" fill="#fff" stroke="#2e2e2e" stroke-width="2"/><path d="M4.6 5.6h7.800M4.600 8.100h7.800M4.600 10.500h7.800" stroke="#2e2e2e" stroke-width="1.100"/><path d="M4.600 13.200h7.800" stroke="#2e2e2e" stroke-width="1.700"/></svg><svg class="abs" style="left:62px;top:5.5px" width="19" height="16" viewBox="0 0 19 16"><rect x="0" y="0" width="12.600" height="12.400" rx="1.600" fill="#3d3d3d"/><path d="M12.600 3.600h2.600l3 3.600v5.200h-5.600z" fill="#3d3d3d"/><path d="M13.600 5h1.200l1.900 2.400h-3.100z" fill="#fff"/><circle cx="4.500" cy="12.800" r="2.300" fill="#3d3d3d"/><circle cx="14.400" cy="12.800" r="2.300" fill="#3d3d3d"/></svg><span class="trkin">打印后生成单号...</span></div><span class="dsh" style="left:99px">快</span><span class="dsh" style="left:130px">货</span></div>
<div class="td" style="left:746px;width:67px;"><div class="ln op" style="top:6px"><a>快递单</a><br><a>发货单</a><br><a style="word-spacing:3px">出 库</a></div></div>
<div class="td" style="left:813px;width:168px;"><div class="ln" style="top:12px;padding-left:5px;line-height:18px"><svg class="flag0" width="12" height="14" viewBox="0 0 12 14"><rect x="0" y="0" width="1" height="14" fill="#d2d2d2"/><rect x="11" y="0" width="1" height="14" fill="#d2d2d2"/><path d="M2 0h8v13.5l-4-3-4 3z" fill="#c4c4c4"/></svg><span class="rd">1111111111222222222</span><br><span class="lk"><i>[</i>编辑<i>]</i></span><div style="color:#666;margin-top:4px">移动端订单</div></div></div>
<div class="td" style="left:981px;width:306px;"><svg class="pimg" width="36" height="36" viewBox="0 0 36 36"><defs><clipPath id="pc1"><rect width="36" height="36" rx="3.5"/></clipPath></defs><g clip-path="url(#pc1)"><rect width="36" height="36" fill="#e7b616"/><rect x="0" y="0" width="36" height="5" fill="#d9a80e"/><ellipse cx="6" cy="2.5" rx="4" ry="1.6" fill="#f7efd0"/><ellipse cx="22" cy="2.5" rx="4.5" ry="1.6" fill="#f7efd0"/><ellipse cx="33" cy="13" rx="6" ry="6.5" fill="#c48d08"/><ellipse cx="34" cy="14" rx="4" ry="4.5" fill="#e0b030"/><ellipse cx="3" cy="31" rx="6.5" ry="7" fill="#8f6a12"/><ellipse cx="25" cy="31" rx="8" ry="7.5" fill="#c99508"/><ellipse cx="26" cy="32" rx="5" ry="5" fill="#f3e2b0"/><path d="M15 14l10 4.5l-1.5 3.5l-9.5-4z" fill="#3c3b38"/><circle cx="12.5" cy="12.5" r="6.3" fill="#5f5e58" stroke="#47463f" stroke-width="1.6" stroke-dasharray="1.7 1.3"/><circle cx="12.5" cy="12.5" r="3" fill="#85847c"/><circle cx="13.5" cy="12" r="1.1" fill="#d8d6cc"/></g></svg><div class="ptxt">195玻纤齿<br>轮离合主<br>盘 x 1</div></div>
</div>
<div class="tr last" style="top:197px">
<div class="td" style="left:0px;width:23px;"><div class="ln" style="top:35px;text-align:center">3</div></div>
<div class="td" style="left:23px;width:23px;"><i class="cb on" style="left:4px;top:34px"><svg class="abs" style="left:0;top:0" width="12" height="12" viewBox="0 0 12 12"><path d="M2.2 6.2L5 9L10 3" fill="none" stroke="#1e7ff0" stroke-width="1.9"/></svg></i></div>
<div class="td" style="left:46px;width:92px;"><div class="ln" style="top:15px;text-align:center;line-height:18px"><span class="ls">jennifer</span>198604<br>18 <svg class="ww" width="15" height="15" viewBox="0 0 15 15"><circle cx="7.5" cy="7.5" r="7" fill="#2b8cff"/><path d="M1.5 10.5L11.5 1.8" stroke="#eaf3fd" stroke-width="1.7"/><circle cx="6.4" cy="10.8" r="1" fill="#eaf3fd"/></svg><br><span class="st">等待出库</span></div></div>
<div class="td" style="left:138px;width:92px;"><div class="ln" style="top:35px;text-align:center">289745384048</div></div>
<div class="td" style="left:230px;width:78px;"><div class="ln" style="top:19px;text-align:center;line-height:20px">骆圆</div><div class="abs" style="left:4px;right:4px;top:41px;border-top:1px dashed #dfe3ea"></div><div class="ln" style="top:45px;text-align:center;line-height:20px">186*******1</div></div>
<div class="td" style="left:308px;width:188px;"><div class="ln" style="top:14px;padding-left:6px;line-height:18px">浙江 杭州市 滨江区 西兴街道<br>铂金时代5-2-1201 <a class="lk"><i>[</i>修改<i>]</i></a><br><a class="lk"><i>[</i>复制<i>]</i></a></div></div>
<div class="td" style="left:496px;width:250px;"><div class="trk"><svg class="abs" style="left:7px;top:4.5px" width="18" height="17" viewBox="0 0 18 17"><rect x="4.5" y="0" width="9" height="2.4" fill="#3d3d3d"/><rect x="0" y="3.8" width="18" height="7.6" rx="1" fill="#3d3d3d"/><rect x="1.4" y="5.2" width="1.8" height="1.5" fill="#fff"/><rect x="5.2" y="9" width="7.6" height="7" fill="#fff" stroke="#3d3d3d" stroke-width="1.6"/></svg><svg class="abs" style="left:34px;top:4px" width="17" height="18" viewBox="0 0 17 18"><rect x="1" y="1" width="15" height="16" rx="1" fill="#fff" stroke="#2e2e2e" stroke-width="2"/><path d="M4.6 5.6h7.800M4.600 8.100h7.800M4.600 10.500h7.800" stroke="#2e2e2e" stroke-width="1.100"/><path d="M4.600 13.200h7.800" stroke="#2e2e2e" stroke-width="1.700"/></svg><svg class="abs" style="left:62px;top:5.5px" width="19" height="16" viewBox="0 0 19 16"><rect x="0" y="0" width="12.600" height="12.400" rx="1.600" fill="#3d3d3d"/><path d="M12.600 3.600h2.600l3 3.600v5.200h-5.600z" fill="#3d3d3d"/><path d="M13.600 5h1.200l1.900 2.400h-3.100z" fill="#fff"/><circle cx="4.500" cy="12.800" r="2.300" fill="#3d3d3d"/><circle cx="14.400" cy="12.800" r="2.300" fill="#3d3d3d"/></svg><span class="trkin">打印后生成单号...</span></div><span class="dsh" style="left:99px">快</span><span class="dsh" style="left:130px">货</span></div>
<div class="td" style="left:746px;width:67px;"><div class="ln op" style="top:6px"><a>快递单</a><br><a>发货单</a><br><a style="word-spacing:3px">出 库</a></div></div>
<div class="td" style="left:813px;width:168px;"><div class="ln" style="top:12px;padding-left:5px;line-height:18px"><svg class="flag0" width="12" height="14" viewBox="0 0 12 14"><rect x="0" y="0" width="1" height="14" fill="#d2d2d2"/><rect x="11" y="0" width="1" height="14" fill="#d2d2d2"/><path d="M2 0h8v13.5l-4-3-4 3z" fill="#c4c4c4"/></svg><span class="rd">11111111112222222222111</span><br><span class="lk"><i>[</i>编辑<i>]</i></span><div style="color:#666;margin-top:4px">移动端订单</div></div></div>
<div class="td" style="left:981px;width:306px;"><svg class="pimg" width="36" height="36" viewBox="0 0 36 36"><defs><clipPath id="pc2"><rect width="36" height="36" rx="3.5"/></clipPath></defs><g clip-path="url(#pc2)"><rect width="36" height="36" fill="#e7b616"/><rect x="0" y="0" width="36" height="5" fill="#d9a80e"/><ellipse cx="6" cy="2.5" rx="4" ry="1.6" fill="#f7efd0"/><ellipse cx="22" cy="2.5" rx="4.5" ry="1.6" fill="#f7efd0"/><ellipse cx="33" cy="13" rx="6" ry="6.5" fill="#c48d08"/><ellipse cx="34" cy="14" rx="4" ry="4.5" fill="#e0b030"/><ellipse cx="3" cy="31" rx="6.5" ry="7" fill="#8f6a12"/><ellipse cx="25" cy="31" rx="8" ry="7.5" fill="#c99508"/><ellipse cx="26" cy="32" rx="5" ry="5" fill="#f3e2b0"/><path d="M15 14l10 4.5l-1.5 3.5l-9.5-4z" fill="#3c3b38"/><circle cx="12.5" cy="12.5" r="6.3" fill="#5f5e58" stroke="#47463f" stroke-width="1.6" stroke-dasharray="1.7 1.3"/><circle cx="12.5" cy="12.5" r="3" fill="#85847c"/><circle cx="13.5" cy="12" r="1.1" fill="#d8d6cc"/></g></svg><div class="ptxt">195玻纤齿<br>轮离合主<br>盘 x 1</div></div>
</div>
<div class="tr" style="top:279px;background:#fff;border-top:0;height:10px"><div class="td" style="left:0px;width:23px;top:0;border-left-color:#e6e9ee"></div><div class="td" style="left:23px;width:23px;top:0;border-left-color:#e6e9ee"></div><div class="td" style="left:46px;width:92px;top:0;border-left-color:#e6e9ee"></div><div class="td" style="left:138px;width:92px;top:0;border-left-color:#e6e9ee"></div><div class="td" style="left:230px;width:78px;top:0;border-left-color:#e6e9ee"></div><div class="td" style="left:308px;width:188px;top:0;border-left-color:#e6e9ee"></div><div class="td" style="left:496px;width:250px;top:0;border-left-color:#e6e9ee"></div><div class="td" style="left:746px;width:67px;top:0;border-left-color:#e6e9ee"></div><div class="td" style="left:813px;width:168px;top:0;border-left-color:#e6e9ee"></div><div class="td" style="left:981px;width:306px;top:0;border-left-color:#e6e9ee"></div></div>
</div>
<!-- /TABLE -->
<!-- ANNOT -->
<svg class="abs" style="left:0;top:0;pointer-events:none" width="1259" height="776" viewBox="0 0 1259 776"><rect x="121.5" y="445.5" width="169" height="46" fill="none" stroke="#e8161f" stroke-width="3"/><rect x="20.700" y="508.8" width="35.800" height="243.7" fill="none" stroke="#e8161f" stroke-width="3"/><path d="M54.0 525.0L102.5 503.7" stroke="#e8161f" stroke-width="4.2" stroke-linecap="round" fill="none"/><path d="M119.0 496.5L104.3 512.8L97.1 496.3z" fill="#e8161f"/><path d="M401.0 421.5L309.3 449.5" stroke="#e8161f" stroke-width="4.2" stroke-linecap="round" fill="none"/><path d="M293.0 454.5L308.8 441.3L313.5 456.6z" fill="#e8161f"/></svg>
<!-- /ANNOT -->
</body>
</html>
